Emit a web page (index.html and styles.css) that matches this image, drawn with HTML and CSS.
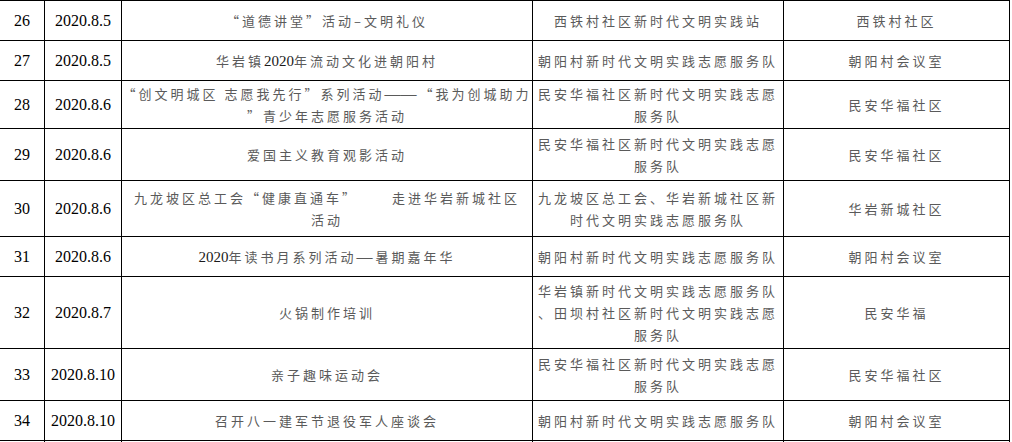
FILE: index.html
```html
<!DOCTYPE html>
<html lang="zh-CN">
<head>
<meta charset="utf-8">
<title>活动记录表</title>
<link rel="stylesheet" href="styles.css">
</head>
<body>
<div class="sheet">
  <div class="cell num">26</div>
  <div class="cell num">2020.8.5</div>
  <div class="cell zh"><span class="t">“道德讲堂”活动–文明礼仪</span></div>
  <div class="cell zh"><span class="t">西铁村社区新时代文明实践站</span></div>
  <div class="cell zh"><span class="t">西铁村社区</span></div>

  <div class="cell num">27</div>
  <div class="cell num">2020.8.5</div>
  <div class="cell zh"><span class="t">华岩镇<span class="d">2020</span>年流动文化进朝阳村</span></div>
  <div class="cell zh"><span class="t">朝阳村新时代文明实践志愿服务队</span></div>
  <div class="cell zh"><span class="t">朝阳村会议室</span></div>

  <div class="cell num">28</div>
  <div class="cell num">2020.8.6</div>
  <div class="cell zh"><span class="t">“创文明城区 志愿我先行”系列活动<span class="dash">——</span>“我为创城助力<br>”青少年志愿服务活动</span></div>
  <div class="cell zh"><span class="t">民安华福社区新时代文明实践志愿<br>服务队</span></div>
  <div class="cell zh"><span class="t">民安华福社区</span></div>

  <div class="cell num">29</div>
  <div class="cell num">2020.8.6</div>
  <div class="cell zh"><span class="t">爱国主义教育观影活动</span></div>
  <div class="cell zh"><span class="t">民安华福社区新时代文明实践志愿<br>服务队</span></div>
  <div class="cell zh"><span class="t">民安华福社区</span></div>

  <div class="cell num">30</div>
  <div class="cell num">2020.8.6</div>
  <div class="cell zh"><span class="t">九龙坡区总工会“健康直通车”<span class="gap"></span>走进华岩新城社区<br>活动</span></div>
  <div class="cell zh"><span class="t">九龙坡区总工会、华岩新城社区新<br>时代文明实践志愿服务队</span></div>
  <div class="cell zh"><span class="t">华岩新城社区</span></div>

  <div class="cell num">31</div>
  <div class="cell num">2020.8.6</div>
  <div class="cell zh"><span class="t"><span class="d">2020</span>年读书月系列活动<span class="dash">—</span>暑期嘉年华</span></div>
  <div class="cell zh"><span class="t">朝阳村新时代文明实践志愿服务队</span></div>
  <div class="cell zh"><span class="t">朝阳村会议室</span></div>

  <div class="cell num">32</div>
  <div class="cell num">2020.8.7</div>
  <div class="cell zh"><span class="t">火锅制作培训</span></div>
  <div class="cell zh"><span class="t">华岩镇新时代文明实践志愿服务队<br>、田坝村社区新时代文明实践志愿<br>服务队</span></div>
  <div class="cell zh"><span class="t">民安华福</span></div>

  <div class="cell num">33</div>
  <div class="cell num">2020.8.10</div>
  <div class="cell zh"><span class="t">亲子趣味运动会</span></div>
  <div class="cell zh"><span class="t">民安华福社区新时代文明实践志愿<br>服务队</span></div>
  <div class="cell zh"><span class="t">民安华福社区</span></div>

  <div class="cell num">34</div>
  <div class="cell num">2020.8.10</div>
  <div class="cell zh"><span class="t">召开八一建军节退役军人座谈会</span></div>
  <div class="cell zh"><span class="t">朝阳村新时代文明实践志愿服务队</span></div>
  <div class="cell zh"><span class="t">朝阳村会议室</span></div>

  <div class="cell tail"></div>
  <div class="cell tail"></div>
  <div class="cell tail"></div>
  <div class="cell tail"></div>
  <div class="cell tail"></div>
</div>
</body>
</html>
```

FILE: styles.css
```css
html, body {
  margin: 0;
  padding: 0;
  background: #ffffff;
  width: 1012px;
  height: 442px;
  overflow: hidden;
}

.sheet {
  display: grid;
  grid-template-columns: 45px 77px 411px 251px 226px;
  grid-template-rows: 40px 40px 48px 52px 56px 40px 72px 52px 40px 1px;
  width: max-content;
  margin-left: -1px;
  border-top: 1px solid #000;
  border-left: 1px solid #000;
}

.cell {
  box-sizing: border-box;
  border-right: 1px solid #000;
  border-bottom: 1px solid #000;
  display: flex;
  align-items: center;
  justify-content: center;
  text-align: center;
  overflow: hidden;
}

.tail {
  border-bottom: none;
}

.num {
  font-family: "Liberation Serif", "Times New Roman", serif;
  font-size: 16px;
  color: #000;
}

.zh {
  font-family: "Noto Sans CJK SC", "Liberation Serif", sans-serif;
  font-size: 13px;
  letter-spacing: 3px;
  line-height: 22px;
  color: #5a5a5a;
  padding: 0 3px;
}

.t {
  display: block;
  white-space: nowrap;
}

.d {
  font-family: "Liberation Serif", "Times New Roman", serif;
  font-size: 15px;
  letter-spacing: 0;
  color: #1a1a1a;
}

.dash {
  letter-spacing: 0;
  font-family: "Liberation Serif", serif;
  font-size: 16px;
  margin-right: 3px;
}

.gap {
  display: inline-block;
  width: 34px;
}
```
